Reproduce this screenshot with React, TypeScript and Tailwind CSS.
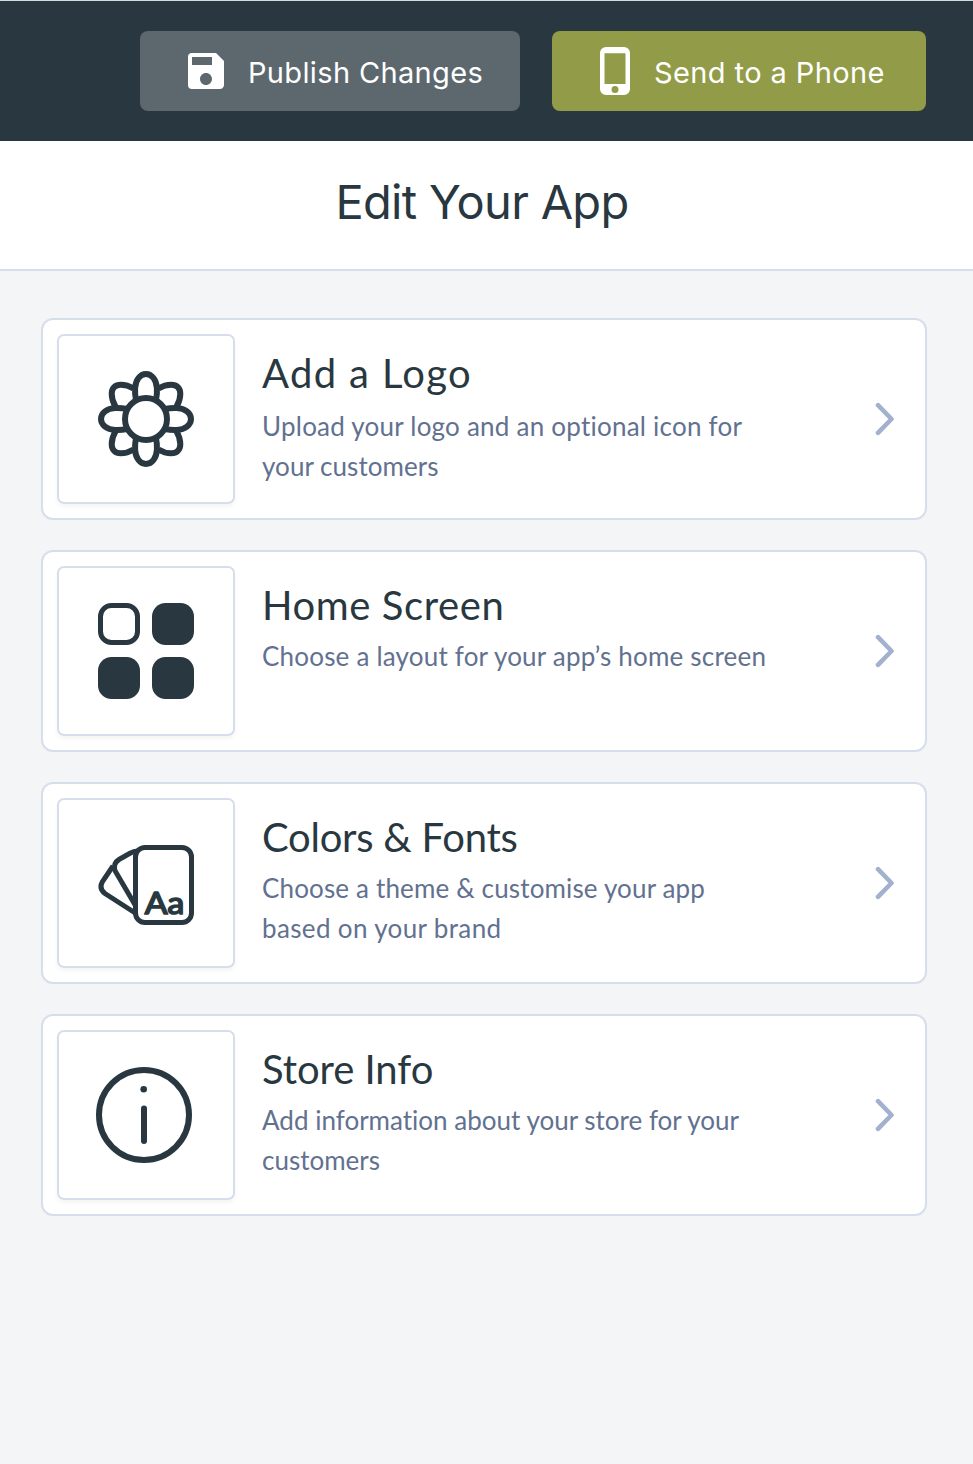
import type { ReactNode } from "react";
import { MdSave } from "react-icons/md";

const PETAL = "M38 29C37 24 36.9 20 37.1 17C37.6 9 42 3 48 3C54 3 58.4 9 58.9 17C59.1 20 59 24 58 29";
const SMALL_PETAL =
  "M35.5 17.5C31 14.7 27 13.7 22.7 13.7C17.2 13.7 13.7 17.2 13.7 22.7C13.7 27 14.7 31 17.5 35.5";

function FlowerIcon() {
  return (
    <svg width="96" height="96" viewBox="0 0 96 96" fill="none" stroke="currentColor" strokeWidth="6">
      <circle cx="48" cy="48" r="21" />
      {[0, 90, 180, 270].map((angle) => (
        <g key={angle} transform={`rotate(${angle} 48 48)`}>
          <path d={PETAL} />
          <path d={SMALL_PETAL} />
        </g>
      ))}
    </svg>
  );
}

function GridIcon() {
  return (
    <svg width="96" height="96" viewBox="0 0 96 96" fill="currentColor">
      <rect x="2.5" y="2.5" width="37" height="37" rx="11" fill="none" stroke="currentColor" strokeWidth="5" />
      <rect x="54" width="42" height="42" rx="13.5" />
      <rect y="54" width="42" height="42" rx="13.5" />
      <rect x="54" y="54" width="42" height="42" rx="13.5" />
    </svg>
  );
}

function SwatchIcon() {
  return (
    <svg className="mt-1" width="96" height="80" viewBox="0 0 96 80" fill="none" stroke="currentColor" strokeWidth="5">
      <rect x="37.5" y="2.5" width="56" height="75" rx="9.5" />
      <path d="M40 6Q36.5 5.7 32 8.2L21 14.5Q14.5 18.5 17.2 26L38 61.5" />
      <path d="M15 21L4.5 36.5Q0.5 43.5 7 48.5L38 68.5" />
      <text
        x="46.8"
        y="69.2"
        fill="currentColor"
        strokeWidth="1.7"
        strokeLinejoin="round"
        className="font-['Lato',sans-serif] text-[31px] font-normal"
        textLength="39.5"
        lengthAdjust="spacingAndGlyphs"
      >
        Aa
      </text>
    </svg>
  );
}

function InfoIcon() {
  return (
    <svg className="mr-1" width="96" height="96" viewBox="0 0 96 96" fill="none" stroke="currentColor" strokeWidth="6">
      <circle cx="48" cy="48" r="45" />
      <path d="M48 41.5V74" strokeLinecap="round" />
      <circle cx="47.7" cy="22.3" r="3.3" fill="currentColor" stroke="none" />
    </svg>
  );
}

function PhoneIcon() {
  return (
    <svg width="30" height="48" viewBox="0 0 30 48" fill="currentColor">
      <path
        fillRule="evenodd"
        d="M6 0H24A6 6 0 0 1 30 6V42A6 6 0 0 1 24 48H6A6 6 0 0 1 0 42V6A6 6 0 0 1 6 0ZM4.5 6.3V37H25.5V6.3ZM15 39A3.5 3.5 0 1 0 15 46A3.5 3.5 0 1 0 15 39Z"
      />
    </svg>
  );
}

type CardProps = {
  icon: ReactNode;
  title: string;
  titleClass: string;
  lines: { text: string; className: string }[];
  linesClass: string;
};

const cards: CardProps[] = [
  {
    icon: <FlowerIcon />,
    title: "Add a Logo",
    titleClass: "tracking-[1.35px]",
    linesClass: "mt-[9px]",
    lines: [
      { text: "Upload your logo and an optional icon for", className: "tracking-[0.23px]" },
      { text: "your customers", className: "tracking-[0.05px]" },
    ],
  },
  {
    icon: <GridIcon />,
    title: "Home Screen",
    titleClass: "tracking-[0.6px]",
    linesClass: "mt-[7px]",
    lines: [{ text: "Choose a layout for your app’s home screen", className: "tracking-[0.2px]" }],
  },
  {
    icon: <SwatchIcon />,
    title: "Colors & Fonts",
    titleClass: "tracking-[-0.25px]",
    linesClass: "mt-[7px]",
    lines: [
      { text: "Choose a theme & customise your app", className: "tracking-[0.15px]" },
      { text: "based on your brand", className: "tracking-[0.36px]" },
    ],
  },
  {
    icon: <InfoIcon />,
    title: "Store Info",
    titleClass: "tracking-[-0.05px]",
    linesClass: "mt-[7px]",
    lines: [
      { text: "Add information about your store for your", className: "tracking-[0.01px]" },
      { text: "customers", className: "tracking-[0.01px]" },
    ],
  },
];

function Card({ icon, title, titleClass, lines, linesClass }: CardProps) {
  return (
    <button className="flex h-[202px] w-full rounded-xl border-2 border-[#d7deeb] bg-white p-3.5 text-left">
      <span className="flex h-[170px] w-[178px] shrink-0 items-center justify-center rounded-[7px] border-2 border-[#d7deeb] text-[#293840] shadow-[0_3px_4px_rgba(41,56,64,0.05)]">
        {icon}
      </span>
      <span className="ml-[27px] flex flex-1 flex-col whitespace-nowrap pt-[15px] font-['Lato',sans-serif] [font-variant-ligatures:none]">
        <span className={`text-[40px] leading-[48px] text-[#293840] ${titleClass}`}>{title}</span>
        <span className={`flex flex-col text-[26px] leading-10 text-[#62718f] ${linesClass}`}>
          {lines.map((line) => (
            <span key={line.text} className={line.className}>
              {line.text}
            </span>
          ))}
        </span>
      </span>
      <svg
        className="mr-4 shrink-0 self-center text-[#a3b1ce]"
        width="20"
        height="34"
        viewBox="0 0 20 34"
        fill="none"
        stroke="currentColor"
        strokeWidth="4.6"
        strokeLinecap="round"
        strokeLinejoin="round"
      >
        <path d="M3 3.2L16.5 17L3 30.8" />
      </svg>
    </button>
  );
}

export default function App() {
  return (
    <div className="flex min-h-[1464px] flex-col bg-[#f3f5f7] font-['Inter',sans-serif]">
      <header className="flex h-[141px] items-start justify-end gap-8 border-t border-[#d5dcdc] bg-[#293840] pt-[30px] pr-[47px] text-[29px] leading-[40px] whitespace-nowrap text-white">
        <button className="flex h-20 w-[380px] items-center rounded-lg bg-[#5c686e] pl-[42px]">
          <MdSave size={48} />
          <span className="ml-[18px] pt-1 tracking-[0.35px]">Publish Changes</span>
        </button>
        <button className="flex h-20 w-[374px] items-center rounded-lg bg-[#929c48] pl-12">
          <PhoneIcon />
          <span className="ml-6 pt-1 tracking-[0.4px]">Send to a Phone</span>
        </button>
      </header>
      <div className="flex h-[130px] justify-center border-b-2 border-[#d8dcec] bg-white pt-[31px] pr-[9px]">
        <h1 className="text-[47px] leading-[60px] tracking-[-0.7px] text-[#293840]">Edit Your App</h1>
      </div>
      <main className="flex flex-col gap-[30px] pt-[47px] pr-[46px] pl-[41px]">
        {cards.map((card) => (
          <Card key={card.title} {...card} />
        ))}
      </main>
    </div>
  );
}
